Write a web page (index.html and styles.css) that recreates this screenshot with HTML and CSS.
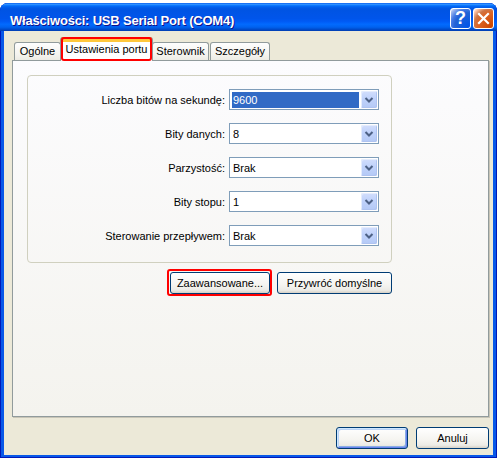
FILE: index.html
```html
<!DOCTYPE html>
<html lang="pl">
<head>
<meta charset="utf-8">
<title>Właściwości: USB Serial Port (COM4)</title>
<link rel="stylesheet" href="styles.css">
</head>
<body>
<div class="window">
  <div class="titlebar">
    <span class="title">Właściwości: USB Serial Port (COM4)</span>
    <div class="tbtns">
      <span class="tbtn help">?</span>
      <span class="tbtn close"><svg width="19" height="19" viewBox="0 0 19 19"><path d="M5 5 L14 14 M14 5 L5 14" stroke="#fff" stroke-width="2.2" stroke-linecap="square"/></svg></span>
    </div>
  </div>
  <div class="client">
    <div class="tabs">
      <div class="tab t-general">Ogólne</div>
      <div class="tab tab-sel">Ustawienia portu</div>
      <div class="tab t-driver">Sterownik</div>
      <div class="tab t-details">Szczegóły</div>
    </div>
    <div class="panel">
      <div class="group">
        <span class="lbl">Liczba bitów na sekundę:</span>
        <div class="combo"><span class="val selected">9600</span><span class="drop"><svg width="16" height="17" viewBox="0 0 16 17"><path d="M4.5 7 L8 10.5 L11.5 7" fill="none" stroke="#4D6185" stroke-width="2"/></svg></span></div>
        <span class="lbl">Bity danych:</span>
        <div class="combo"><span class="val">8</span><span class="drop"><svg width="16" height="17" viewBox="0 0 16 17"><path d="M4.5 7 L8 10.5 L11.5 7" fill="none" stroke="#4D6185" stroke-width="2"/></svg></span></div>
        <span class="lbl">Parzystość:</span>
        <div class="combo"><span class="val">Brak</span><span class="drop"><svg width="16" height="17" viewBox="0 0 16 17"><path d="M4.5 7 L8 10.5 L11.5 7" fill="none" stroke="#4D6185" stroke-width="2"/></svg></span></div>
        <span class="lbl">Bity stopu:</span>
        <div class="combo"><span class="val">1</span><span class="drop"><svg width="16" height="17" viewBox="0 0 16 17"><path d="M4.5 7 L8 10.5 L11.5 7" fill="none" stroke="#4D6185" stroke-width="2"/></svg></span></div>
        <span class="lbl">Sterowanie przepływem:</span>
        <div class="combo"><span class="val">Brak</span><span class="drop"><svg width="16" height="17" viewBox="0 0 16 17"><path d="M4.5 7 L8 10.5 L11.5 7" fill="none" stroke="#4D6185" stroke-width="2"/></svg></span></div>
      </div>
      <div class="actions">
        <button class="btn btn-adv">Zaawansowane...</button>
        <button class="btn btn-reset">Przywróć domyślne</button>
      </div>
    </div>
    <div class="footer">
      <button class="btn btn-ok">OK</button>
      <button class="btn btn-cancel">Anuluj</button>
    </div>
  </div>
</div>
</body>
</html>
```
FILE: styles.css
```css
* { box-sizing: border-box; }
body {
  margin: 0;
  background: #fff;
  font-family: "Liberation Sans", Arial, sans-serif;
  font-size: 11px;
  color: #000;
}
.window {
  margin-top: 3px;
  width: 497px;
  height: 455px;
  display: flex;
  flex-direction: column;
  border-radius: 8px 8px 0 0;
  overflow: hidden;
  background: #0858E8;
  box-shadow: inset 1px 0 #0019B8, inset -1px 0 #0019B8, inset 0 -1px #0019B8;
}
.titlebar {
  flex: none;
  height: 28px;
  display: flex;
  justify-content: space-between;
  align-items: flex-start;
  padding: 0 3px 0 10px;
  background: linear-gradient(to bottom, #0058EE 0%, #3593FF 4%, #288EFF 6%, #127DFF 8%, #036FFC 10%, #0262EE 14%, #0057E5 20%, #0054E3 24%, #0055EB 56%, #005BF5 66%, #026AFE 76%, #0062EF 86%, #0052D6 92%, #0046C4 96%, #003DB0 100%);
}
.title {
  margin-top: 10px;
  color: #fff;
  font-weight: bold;
  font-size: 13px;
  letter-spacing: -0.2px;
  line-height: 16px;
  text-shadow: 1px 1px #0F1089;
  white-space: nowrap;
}
.tbtns {
  margin-top: 5px;
  display: flex;
  gap: 2px;
}
.tbtn {
  width: 21px;
  height: 21px;
  border: 1px solid #fff;
  border-radius: 3px;
  display: flex;
  align-items: center;
  justify-content: center;
  color: #fff;
}
.help {
  background: radial-gradient(circle at 90% 90%, #0054E9 0%, #2263D5 55%, #4479E4 70%, #A3BBEC 90%, #fff 100%);
  font-weight: bold;
  font-size: 18px;
  line-height: 19px;
}
.close {
  background: radial-gradient(circle at 90% 90%, #CC4600 0%, #DC6527 55%, #CD7546 70%, #FFCCB2 90%, #fff 100%);
}
.client {
  flex: 1;
  margin: 0 4px 3px 4px;
  background: #ECE9D8;
  display: flex;
  flex-direction: column;
  padding: 6px 4px 0 8px;
}
.tabs {
  display: flex;
  align-items: flex-end;
  height: 23px;
  padding-left: 2px;
  position: relative;
  z-index: 1;
}
.tab {
  height: 18px;
  margin-right: 1px;
  border: 1px solid #919B9C;
  border-bottom: 0;
  border-radius: 3px 3px 0 0;
  background: linear-gradient(#FEFEFE, #F4F3EE 70%, #ECEBE4);
  text-align: center;
  line-height: 17px;
  white-space: nowrap;
}
.t-general { width: 47px; }
.t-driver { width: 57px; }
.t-details { width: 60px; }
.tab-sel {
  position: relative;
  width: 93px;
  height: 24px;
  margin: 0 -1px -1px -2px;
  border: 1px solid #919B9C;
  border-top: 0;
  border-bottom: 0;
  background: linear-gradient(#E68B2C 0 2px, #FFC73C 2px 5px, #fff 5px);
  padding-top: 4px;
  line-height: 16px;
}
.tab-sel::after {
  content: "";
  position: absolute;
  inset: 0 0 0 0;
  border: 2px solid #FF0000;
  border-radius: 3px;
}
.panel {
  height: 357px;
  border: 1px solid #919B9C;
  background: linear-gradient(#FCFCFE, #F4F3EE);
  box-shadow: 1px 1px 0 #C8C5B7;
  padding: 14px 0 0 14px;
}
.group {
  width: 365px;
  height: 188px;
  border: 1px solid #D0D0BF;
  border-radius: 4px;
  display: grid;
  grid-template-columns: 1fr 150px;
  column-gap: 4px;
  row-gap: 13px;
  align-content: start;
  align-items: center;
  padding: 13px 12px 0 0;
}
.lbl {
  text-align: right;
  white-space: nowrap;
}
.combo {
  height: 21px;
  border: 1px solid #7F9DB9;
  background: #fff;
  padding: 1px;
  display: flex;
}
.val {
  flex: 1;
  margin: 1px 2px 0 1px;
  padding-left: 1px;
  display: flex;
  align-items: center;
}
.val.selected {
  background: #316AC5;
  color: #fff;
}
.drop {
  width: 16px;
  flex: none;
  border-radius: 2px;
  background: linear-gradient(#D2DEFC, #C1D3FB 40%, #B4C9F6);
  box-shadow: inset 1px 1px #E4ECFD, inset -1px -1px #AFC3F0;
  display: flex;
}
.actions {
  width: 365px;
  margin-top: 9px;
  display: flex;
  justify-content: flex-end;
  gap: 7px;
}
.btn {
  height: 22px;
  padding: 0;
  border: 1px solid #003C74;
  border-radius: 3px;
  background: linear-gradient(#FFFFFF, #F5F4F0 60%, #ECEBE6 86%, #D6D0C5);
  font-family: "Liberation Sans", Arial, sans-serif;
  font-size: 11px;
  color: #000;
  position: relative;
}
.btn-adv { width: 100px; }
.btn-adv::after {
  content: "";
  position: absolute;
  inset: -4px -3px -3px -4px;
  border: 2px solid #FF0000;
  border-radius: 3px;
}
.btn-reset { width: 115px; }
.footer {
  margin-top: 10px;
  display: flex;
  justify-content: flex-end;
  gap: 8px;
}
.btn-ok {
  width: 72px;
  box-shadow: inset 1px 1px #CEE7FF, inset -1px -1px #6982EE, inset 2px 2px #BCD4F6, inset -2px -2px #89ADE4;
}
.btn-cancel { width: 73px; }
```
